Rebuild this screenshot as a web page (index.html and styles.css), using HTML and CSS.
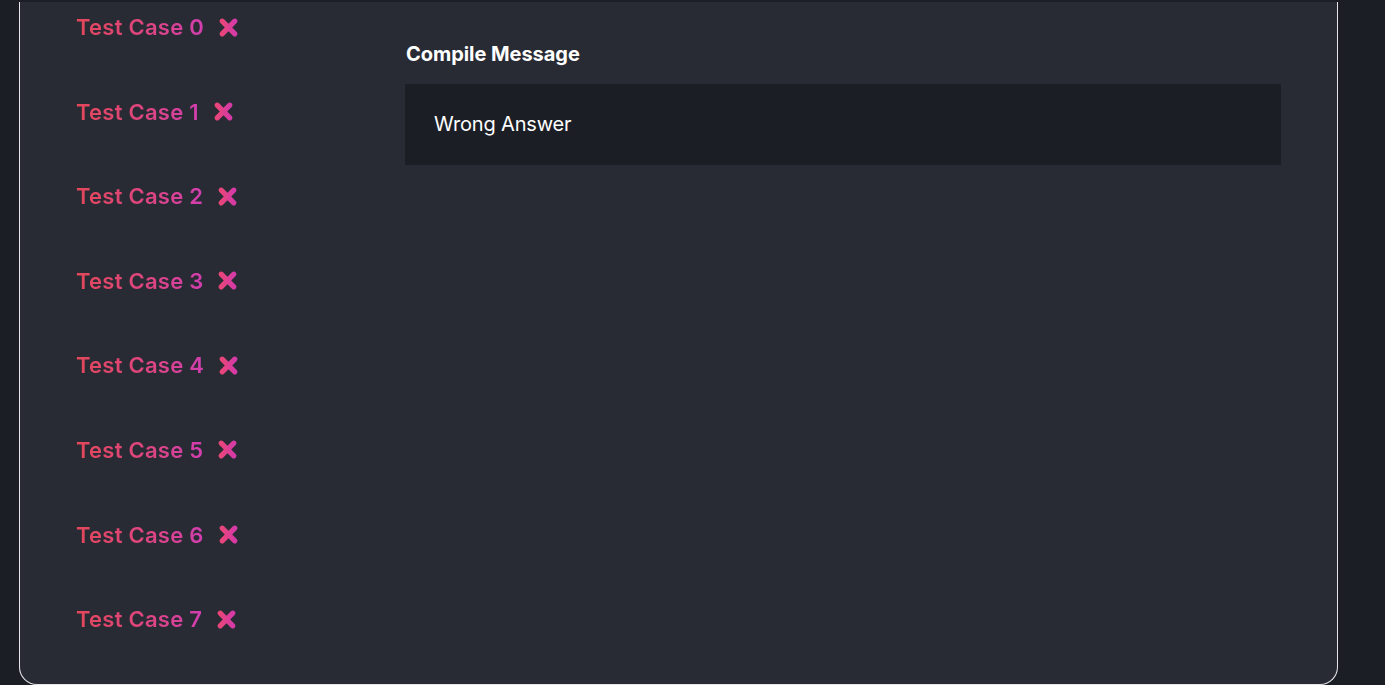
FILE: index.html
```html
<!DOCTYPE html>
<html>
<head>
<meta charset="utf-8">
<link rel="stylesheet" href="styles.css">
</head>
<body>
<svg width="0" height="0" class="defs" aria-hidden="true">
  <defs>
    <linearGradient id="xg" x1="0" y1="0" x2="1" y2="0">
      <stop offset="0" stop-color="#e8457a"/>
      <stop offset="1" stop-color="#d63aa6"/>
    </linearGradient>
  </defs>
</svg>
<div class="card">
  <ul class="cases">
    <li class="case"><span class="label">Test Case 0</span><svg class="x" viewBox="0 0 20 20"><path d="M4 4L16 16M16 4L4 16"/></svg></li>
    <li class="case"><span class="label">Test Case 1</span><svg class="x" viewBox="0 0 20 20"><path d="M4 4L16 16M16 4L4 16"/></svg></li>
    <li class="case"><span class="label">Test Case 2</span><svg class="x" viewBox="0 0 20 20"><path d="M4 4L16 16M16 4L4 16"/></svg></li>
    <li class="case"><span class="label">Test Case 3</span><svg class="x" viewBox="0 0 20 20"><path d="M4 4L16 16M16 4L4 16"/></svg></li>
    <li class="case"><span class="label">Test Case 4</span><svg class="x" viewBox="0 0 20 20"><path d="M4 4L16 16M16 4L4 16"/></svg></li>
    <li class="case"><span class="label">Test Case 5</span><svg class="x" viewBox="0 0 20 20"><path d="M4 4L16 16M16 4L4 16"/></svg></li>
    <li class="case"><span class="label">Test Case 6</span><svg class="x" viewBox="0 0 20 20"><path d="M4 4L16 16M16 4L4 16"/></svg></li>
    <li class="case"><span class="label">Test Case 7</span><svg class="x" viewBox="0 0 20 20"><path d="M4 4L16 16M16 4L4 16"/></svg></li>
  </ul>
  <section class="result">
    <h2 class="title">Compile Message</h2>
    <div class="message">Wrong Answer</div>
  </section>
</div>
</body>
</html>
```

FILE: styles.css
```css
html, body {
  margin: 0;
  padding: 0;
  height: 100%;
  overflow: hidden;
}
body {
  background: #1c1e26;
  font-family: "Inter", "Lato", sans-serif;
  padding-top: 2px;
  box-sizing: border-box;
}
.defs {
  position: absolute;
}
.card {
  margin-left: 19px;
  width: 1319px;
  height: 683px;
  box-sizing: border-box;
  background: #292b34;
  border: 1.5px solid #e6e6ea;
  border-top: none;
  border-radius: 0 0 18px 18px;
  display: flex;
}
.cases {
  list-style: none;
  margin: 0;
  padding: 10px 0 0 56px;
  width: 385px;
  box-sizing: border-box;
  display: flex;
  flex-direction: column;
  gap: 54.6px;
}
.case {
  height: 30px;
  display: flex;
  align-items: center;
  gap: 14px;
}
.label {
  font-weight: 600;
  font-size: 22px;
  letter-spacing: 0.25px;
  background: linear-gradient(90deg, #e3475a 0%, #dd4584 60%, #d23eb0 100%);
  -webkit-background-clip: text;
  background-clip: text;
  color: transparent;
}
.x {
  width: 21px;
  height: 21px;
}
.x path {
  stroke: url(#xg);
  stroke-width: 5;
  stroke-linecap: round;
  fill: none;
}
.result {
  padding-top: 39px;
  width: 876px;
}
.title {
  margin: 0 0 17px 1px;
  color: #ffffff;
  font-size: 20px;
  font-weight: 700;
  line-height: 26px;
  letter-spacing: -0.05px;
}
.message {
  background: #1c1e26;
  color: #ffffff;
  height: 81px;
  box-sizing: border-box;
  padding-left: 29px;
  padding-bottom: 2px;
  display: flex;
  align-items: center;
  font-size: 20px;
  letter-spacing: -0.15px;
}
```
